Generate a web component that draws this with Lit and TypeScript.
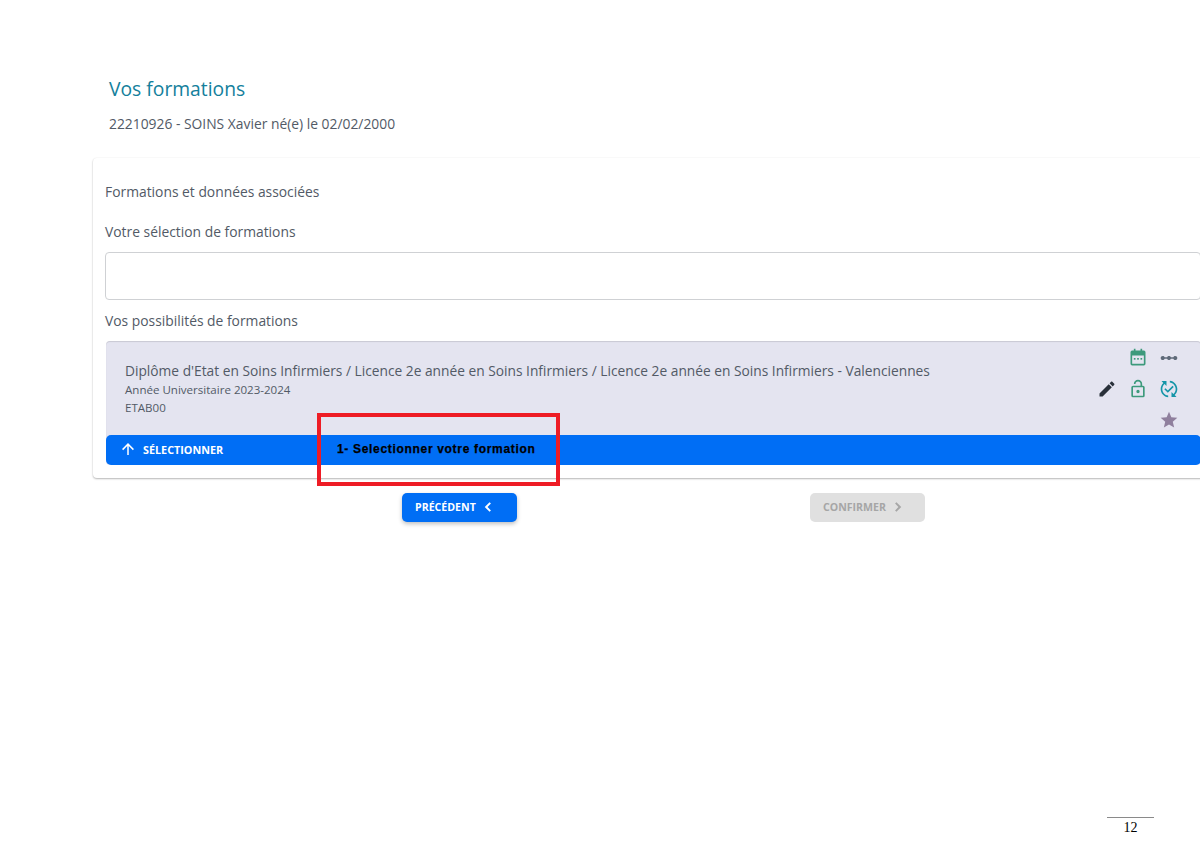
import { LitElement, html, css, svg } from "lit";
import { customElement } from "lit/decorators.js";

const icon = (cls: string, body: unknown) =>
  html`<svg class="ic ${cls}" viewBox="0 0 24 24">${body}</svg>`;

@customElement("app-root")
export class AppRoot extends LitElement {
  static styles = css`
    :host {
      display: block;
      position: relative;
      width: 1200px;
      height: 848px;
      overflow: hidden;
      background: #fff;
      font-family: "Open Sans", "Liberation Sans", sans-serif;
      color: #525a66;
    }
    .page { padding-top: 77px; display: flex; flex-direction: column; }
    h1 {
      margin: 0 0 0 109px;
      font-size: 19.3px;
      line-height: 24px;
      font-weight: 400;
      color: #14809c;
    }
    .who { margin: 13px 0 0 109px; font-size: 13.85px; line-height: 20px; }
    .card {
      box-sizing: border-box;
      margin: 24px 0 0 93px;
      width: 1120px;
      height: 320px;
      padding: 24px 12px 0 13px;
      background: #fff;
      border-radius: 4px;
      box-shadow: 0 1px 2px rgba(0, 0, 0, 0.28), 0 0 2px rgba(0, 0, 0, 0.06);
      display: flex;
      flex-direction: column;
    }
    .t { font-size: 13.85px; line-height: 20px; margin-left: -1px; }
    .t.sel { margin-top: 20px; }
    .box {
      box-sizing: border-box;
      height: 48px;
      margin: 10px 0 0 -1px;
      border: 1px solid #cfd1d4;
      border-radius: 4px;
    }
    .t.pos { margin-top: 11px; }
    .panel {
      margin-top: 10px;
      height: 124px;
      display: flex;
      flex-direction: column;
      background: #e4e4f0;
      border-radius: 4px;
      box-shadow: inset 0 1px 1px rgba(0, 0, 0, 0.12);
    }
    .body { flex: 1; position: relative; padding: 20px 19px 0; }
    .name { font-size: 13.75px; line-height: 20px; }
    .sub { font-size: 11.55px; line-height: 16px; margin-top: 1px; }
    .sub + .sub { margin-top: 2px; }
    .icons {
      position: absolute;
      top: 1px;
      right: 17px;
      display: grid;
      grid-template-columns: repeat(3, 31px);
      grid-auto-rows: 31px;
      place-items: center;
    }
    .ic { width: 20px; height: 20px; display: block; }
    .green { fill: #3d9a7c; }
    .gray { fill: #5f6a79; }
    .dark { fill: #29303a; }
    .teal { fill: #1595a8; }
    .mauve { fill: #8f7f9d; }
    .bar {
      height: 30px;
      box-sizing: border-box;
      padding: 0 0 2px 13px;
      display: flex;
      align-items: center;
      gap: 6px;
      background: #006ef5;
      border-radius: 5px;
      color: #fff;
      font-size: 10.8px;
      font-weight: 700;
    }
    .bar .ic { width: 18px; height: 18px; fill: #fff; }
    .actions { display: flex; margin: 15px 0 0 402px; gap: 293px; }
    .btn {
      box-sizing: border-box;
      width: 115px;
      height: 29px;
      border-radius: 5px;
      padding: 0 0 1px 13px;
      display: flex;
      align-items: center;
      gap: 3px;
      font-size: 10.6px;
      font-weight: 700;
    }
    .btn .ic { width: 18px; height: 18px; fill: none; stroke-width: 2.6; }
    .primary {
      background: #006ef5;
      color: #fff;
      box-shadow: 0 2px 4px rgba(0, 0, 0, 0.25);
    }
    .primary .ic { stroke: #fff; }
    .off { background: #e0e0e0; color: #a6a6a6; }
    .off .ic { stroke: #a6a6a6; }
    .note {
      position: absolute;
      left: 317px;
      top: 413px;
      box-sizing: border-box;
      width: 243px;
      height: 73px;
      border: 4px solid #ee1c25;
      padding: 24px 0 0 16px;
      font-family: "Liberation Sans", Arial, sans-serif;
      font-size: 12px;
      line-height: 16px;
      font-weight: 700;
      letter-spacing: 0.68px;
      -webkit-text-stroke: 0.25px #000;
      color: #000;
      white-space: nowrap;
    }
    .foot {
      position: absolute;
      left: 1107px;
      top: 817px;
      width: 47px;
      border-top: 1px solid #8a8a8a;
      text-align: center;
      font-family: "Liberation Serif", serif;
      font-size: 14px;
      line-height: 20px;
      color: #000;
    }
  `;

  render() {
    return html`
      <div class="page">
        <h1>Vos formations</h1>
        <p class="who">22210926 - SOINS Xavier né(e) le 02/02/2000</p>
        <section class="card">
          <div class="t">Formations et données associées</div>
          <div class="t sel">Votre sélection de formations</div>
          <div class="box"></div>
          <div class="t pos">Vos possibilités de formations</div>
          <div class="panel">
            <div class="body">
              <div class="name">Diplôme d'Etat en Soins Infirmiers / Licence 2e année en Soins Infirmiers / Licence 2e année en Soins Infirmiers - Valenciennes</div>
              <div class="sub">Année Universitaire 2023-2024</div>
              <div class="sub">ETAB00</div>
              <div class="icons">
                <span></span>
                ${icon("green", svg`<path d="M7 1h2v2h6V1h2v2h2a2 2 0 0 1 2 2v14a2 2 0 0 1-2 2H5a2 2 0 0 1-2-2V5a2 2 0 0 1 2-2h2V1zM5 9v10h14V9H5z"/><rect x="7" y="12" width="2" height="2"/><rect x="11" y="12" width="2" height="2"/><rect x="15" y="12" width="2" height="2"/>`)}
                ${icon("gray", svg`<path d="M19.5 9.5c-1.03 0-1.9.62-2.29 1.5h-2.92c-.39-.88-1.26-1.5-2.29-1.5s-1.9.62-2.29 1.5H6.79c-.39-.88-1.26-1.5-2.29-1.5C3.12 9.5 2 10.62 2 12s1.12 2.5 2.5 2.5c1.03 0 1.9-.62 2.29-1.5h2.92c.39.88 1.26 1.5 2.29 1.5s1.9-.62 2.29-1.5h2.92c.39.88 1.26 1.5 2.29 1.5 1.38 0 2.5-1.12 2.5-2.5s-1.12-2.5-2.5-2.5z"/>`)}
                ${icon("dark", svg`<path d="M20.71 7.04c.39-.39.39-1.04 0-1.41l-2.34-2.34c-.37-.39-1.02-.39-1.41 0l-1.84 1.83 3.75 3.75M3 17.25V21h3.75L17.81 9.93l-3.75-3.75L3 17.25z"/>`)}
                ${icon("green", svg`<path d="M6 8h9V6a3 3 0 0 0-6 0H7a5 5 0 0 1 10 0v2h1a2 2 0 0 1 2 2v10a2 2 0 0 1-2 2H6a2 2 0 0 1-2-2V10a2 2 0 0 1 2-2zm0 2v10h12V10H6zm6 3a2 2 0 1 1 0 4 2 2 0 0 1 0-4z"/>`)}
                ${icon("teal", svg`<path d="M17.66 9.53l-7.07 7.07-4.24-4.24 1.41-1.41 2.83 2.83 5.66-5.66 1.41 1.41zM4 12c0-2.33 1.02-4.42 2.62-5.88L9 8.5v-6H3l2.2 2.2C3.24 6.52 2 9.11 2 12c0 5.19 3.95 9.45 9 9.95v-2.02c-3.94-.49-7-3.86-7-7.93zm18 0c0-5.19-3.95-9.45-9-9.95v2.02c3.94.49 7 3.86 7 7.93 0 2.33-1.02 4.42-2.62 5.88L15 15.5v6h6l-2.2-2.2c1.96-1.82 3.2-4.41 3.2-7.3z"/>`)}
                <span></span><span></span>
                ${icon("mauve", svg`<path d="M12 17.27 18.18 21l-1.64-7.03L22 9.24l-7.19-.62L12 2 9.19 8.62 2 9.24l5.45 4.73L5.82 21z"/>`)}
              </div>
            </div>
            <div class="bar">
              ${icon("", svg`<path d="M13 20h-2V8l-5.5 5.5-1.42-1.42L12 4.16l7.92 7.92-1.42 1.42L13 8v12z"/>`)}
              <span>SÉLECTIONNER</span>
            </div>
          </div>
        </section>
        <div class="actions">
          <div class="btn primary">
            <span>PRÉCÉDENT</span>
            ${icon("", svg`<path d="M15 6.5 9.5 12l5.5 5.5"/>`)}
          </div>
          <div class="btn off">
            <span>CONFIRMER</span>
            ${icon("", svg`<path d="M9 6.5 14.500 12 9 17.500"/>`)}
          </div>
        </div>
      </div>
      <div class="note">1- Selectionner votre formation</div>
      <div class="foot">12</div>
    `;
  }
}
